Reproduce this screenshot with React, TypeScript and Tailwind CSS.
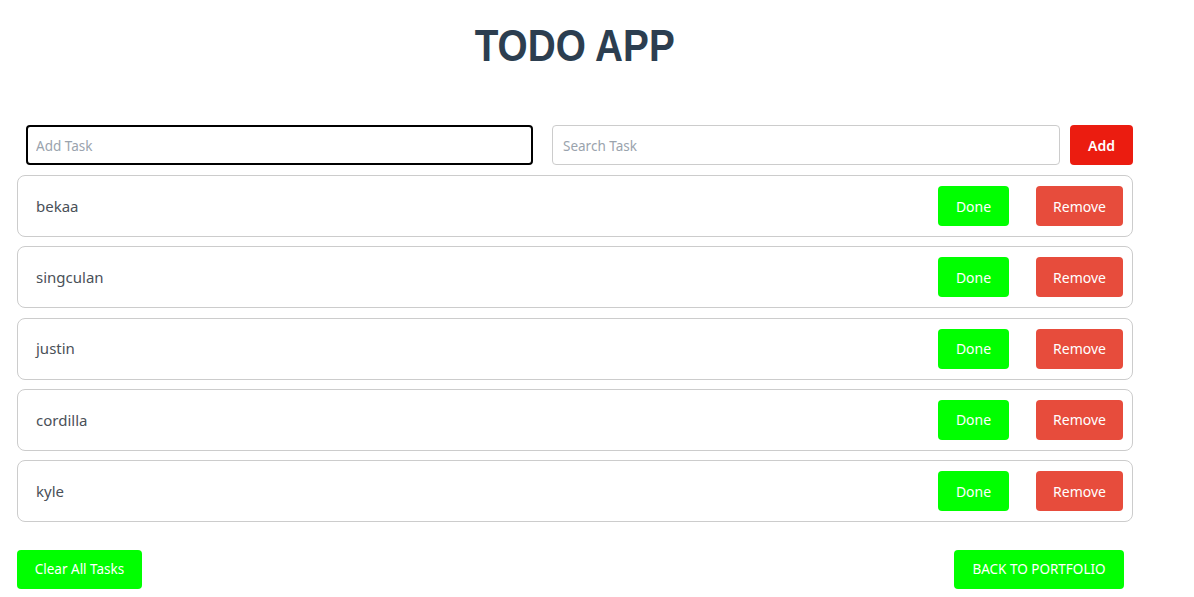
const tasks = ["bekaa", "singculan", "justin", "cordilla", "kyle"]

function TaskRow({ name }: { name: string }) {
  return (
    <div className="flex h-[62px] items-center justify-between rounded-lg border border-[#cccccc] pl-[18px] pr-[9px]">
      <span className="text-[15px] text-[#4a5058]">{name}</span>
      <div className="flex items-center gap-[27px]">
        <button className="h-[40px] w-[71px] rounded bg-[#00ff00] text-[14px] text-white">Done</button>
        <button className="h-[40px] w-[87px] rounded bg-[#e74c3c] text-[14px] text-white">Remove</button>
      </div>
    </div>
  )
}

export default function App() {
  return (
    <div className="min-h-screen bg-white font-['Noto_Sans',sans-serif]">
      <div className="ml-[17px] w-[1116px]">
        <div className="pt-[20px] text-center">
          <h1 className="inline-block scale-x-[0.88] font-['Liberation_Sans',sans-serif] text-[44px] font-bold leading-[52px] text-[#2c3e50]">
            TODO APP
          </h1>
        </div>

        <div className="mt-[53px] flex items-center pl-[9px]">
          <input
            placeholder="Add Task"
            className="h-[40px] w-[507px] rounded border-2 border-black px-[8px] pt-[2px] text-[13.5px] outline-none placeholder:text-[#9aa3ad]"
          />
          <input
            placeholder="Search Task"
            className="ml-[19px] h-[40px] w-[508px] rounded border border-[#cccccc] px-[10px] pt-[2px] text-[13.5px] outline-none placeholder:text-[#9aa3ad]"
          />
          <button className="ml-[10px] h-[40px] w-[63px] rounded bg-[#eb1c10] text-[14px] font-semibold text-white">
            Add
          </button>
        </div>

        <div className="mt-[10px] flex flex-col gap-[9.25px]">
          {tasks.map((t) => (
            <TaskRow key={t} name={t} />
          ))}
        </div>

        <div className="mt-[28px] flex items-center justify-between pr-[9px]">
          <button className="h-[39px] w-[125px] rounded bg-[#00ff00] text-[13.5px] text-white">Clear All Tasks</button>
          <button className="h-[39px] w-[170px] rounded bg-[#00ff00] text-[13.5px] text-white">BACK TO PORTFOLIO</button>
        </div>
      </div>
    </div>
  )
}
